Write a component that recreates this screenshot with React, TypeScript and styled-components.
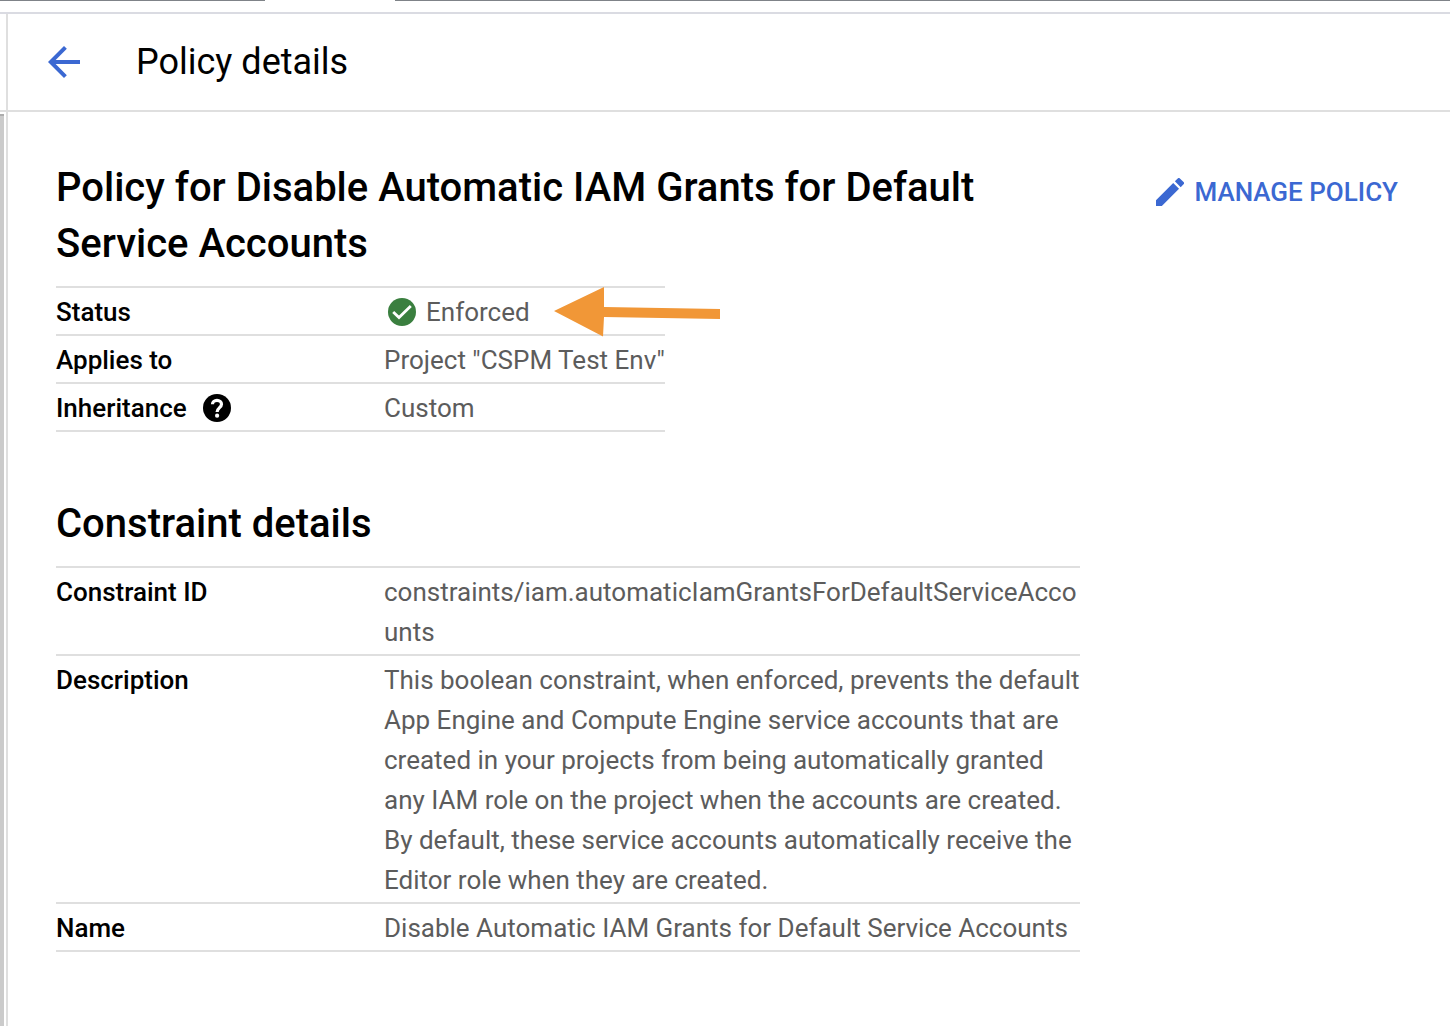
import React from "react";
import styled, { createGlobalStyle } from "styled-components";

const color = {
  blue: "#3b68d2",
  ink: "#000000",
  muted: "#5c5c5c",
  line: "#dfdfdf",
  strip: "#dadbe2",
  green: "#3a7f3f",
  orange: "#f19737",
};

const GlobalStyle = createGlobalStyle`
  *, *::before, *::after { box-sizing: border-box; }
  html, body { margin: 0; background: #ffffff; }
  body {
    font-family: Roboto, "Liberation Sans", sans-serif;
    font-size: 26px;
    line-height: 40px;
    color: ${color.ink};
  }
`;

const Page = styled.div`
  min-height: 100vh;
  display: flex;
  flex-direction: column;
`;

const TabStrip = styled.div`
  display: flex;
  height: 14px;
  border-bottom: 2px solid ${color.strip};
`;

const TabEdge = styled.div<{ $grow?: boolean }>`
  height: 1px;
  width: 265px;
  flex: ${(p) => (p.$grow ? "1" : "none")};
  background: #7f8388;
`;

const ActiveTab = styled.div`
  width: 130px;
`;

const Body = styled.div`
  flex: 1;
  display: flex;
`;

const Rail = styled.div`
  width: 8px;
  display: flex;
  flex-direction: column;
  border-right: 2px solid ${color.line};
`;

const RailHead = styled.div`
  height: 98px;
  border-bottom: 2px solid ${color.line};
`;

const RailBar = styled.div`
  flex: 1;
  width: 4px;
  margin-top: 2px;
  background: #cbcbcb;
  border-top: 2px solid #adadad;
`;

const Panel = styled.div`
  flex: 1;
  min-width: 0;
`;

const Header = styled.header`
  display: flex;
  align-items: center;
  gap: 48px;
  height: 98px;
  padding: 0 32px;
  border-bottom: 2px solid ${color.line};
`;

const BackButton = styled.button`
  display: flex;
  padding: 0;
  border: 0;
  background: none;
  color: ${color.blue};
  cursor: pointer;
`;

const PageTitle = styled.h1`
  margin: 0;
  font-size: 36px;
  line-height: 48px;
  font-weight: 400;
`;

const Content = styled.div`
  display: flex;
  justify-content: space-between;
  align-items: flex-start;
  gap: 48px;
  padding: 48px 52px 48px 48px;
`;

const Main = styled.main`
  flex: 1;
  max-width: 1024px;
`;

const Section = styled.section`
  & + & {
    margin-top: 64px;
  }
`;

const SectionTitle = styled.h2`
  margin: 0 0 14px;
  font-size: 40px;
  line-height: 56px;
  font-weight: 500;
`;

const Details = styled.table`
  border-spacing: 0;
  border-top: 2px solid ${color.line};
`;

const Label = styled.th`
  width: 328px;
  min-width: 328px;
  padding: 4px 0 2px;
  border-bottom: 2px solid ${color.line};
  font-weight: 500;
  text-align: left;
  vertical-align: top;
`;

const Value = styled.td`
  padding: 4px 0 2px;
  border-bottom: 2px solid ${color.line};
  color: ${color.muted};
  overflow-wrap: anywhere;
`;

const LabelWithHelp = styled.div`
  display: flex;
  align-items: center;
  gap: 16px;
`;

const HelpButton = styled.button`
  display: flex;
  padding: 0;
  border: 0;
  background: none;
  color: ${color.ink};
`;

const Status = styled.div`
  position: relative;
  display: flex;
  align-items: center;
  gap: 8px;
  padding-left: 2px;
`;

const Pointer = styled.svg`
  position: absolute;
  left: 170px;
  top: -5px;
  width: 167px;
  height: 50px;
`;

const ManageButton = styled.button`
  display: flex;
  align-items: center;
  gap: 10px;
  margin-top: 12px;
  padding: 0;
  border: 0;
  background: none;
  color: ${color.blue};
  font: inherit;
  font-weight: 500;
  white-space: nowrap;
  cursor: pointer;
`;

const BackIcon = () => (
  <svg width="48" height="48" viewBox="0 0 24 24" fill="currentColor" aria-hidden="true">
    <path d="M20 11H7.83l5.59-5.59L12 4l-8 8 8 8 1.41-1.41L7.83 13H20v-2z" />
  </svg>
);

const EditIcon = () => (
  <svg width="28" height="28" viewBox="3 3 18 18" fill="currentColor" aria-hidden="true">
    <path d="M3 17.25V21h3.75L17.81 9.94l-3.75-3.75L3 17.25zM20.71 7.04a.996.996 0 0 0 0-1.41l-2.34-2.34a.996.996 0 0 0-1.41 0l-1.83 1.83 3.75 3.75 1.83-1.83z" />
  </svg>
);

const HelpIcon = () => (
  <svg width="28" height="28" viewBox="0 0 28 28" aria-hidden="true">
    <circle cx="14" cy="14" r="14" fill="currentColor" />
    <path
      d="M9.5 10.3a4.5 4 0 0 1 9 0c0 3.3-4.4 3.4-4.4 7.7"
      fill="none"
      stroke="#fff"
      strokeWidth="3.2"
    />
    <circle cx="14.1" cy="21.7" r="2.1" fill="#fff" />
  </svg>
);

const EnforcedIcon = () => (
  <svg width="32" height="32" viewBox="0 0 32 32" aria-hidden="true">
    <circle cx="16" cy="16" r="14" fill={color.green} />
    <path d="M7.2 16l5.8 5.6L24.8 10" fill="none" stroke="#fff" strokeWidth="2.8" />
  </svg>
);

const App = () => (
  <>
    <GlobalStyle />
    <Page>
      <TabStrip>
        <TabEdge />
        <ActiveTab />
        <TabEdge $grow />
      </TabStrip>
      <Body>
        <Rail>
          <RailHead />
          <RailBar />
        </Rail>
        <Panel>
          <Header>
            <BackButton type="button" aria-label="Back">
              <BackIcon />
            </BackButton>
            <PageTitle>Policy details</PageTitle>
          </Header>
          <Content>
            <Main>
              <Section>
                <SectionTitle>
                  Policy for Disable Automatic IAM Grants for Default Service Accounts
                </SectionTitle>
                <Details>
                  <tbody>
                    <tr>
                      <Label scope="row">Status</Label>
                      <Value>
                        <Status>
                          <EnforcedIcon />
                          Enforced
                          <Pointer viewBox="0 0 167 50" aria-hidden="true">
                            <path
                              d="M0 24L50 0L50 20L166 22V32L50 30L49 49.5Z"
                              fill={color.orange}
                            />
                          </Pointer>
                        </Status>
                      </Value>
                    </tr>
                    <tr>
                      <Label scope="row">Applies to</Label>
                      <Value>Project "CSPM Test Env"</Value>
                    </tr>
                    <tr>
                      <Label scope="row">
                        <LabelWithHelp>
                          Inheritance
                          <HelpButton type="button" aria-label="Help">
                            <HelpIcon />
                          </HelpButton>
                        </LabelWithHelp>
                      </Label>
                      <Value>Custom</Value>
                    </tr>
                  </tbody>
                </Details>
              </Section>
              <Section>
                <SectionTitle>Constraint details</SectionTitle>
                <Details>
                  <tbody>
                    <tr>
                      <Label scope="row">Constraint ID</Label>
                      <Value>constraints/iam.automaticIamGrantsForDefaultServiceAccounts</Value>
                    </tr>
                    <tr>
                      <Label scope="row">Description</Label>
                      <Value>
                        This boolean constraint, when enforced, prevents the default App Engine
                        and Compute Engine service accounts that are created in your projects
                        from being automatically granted any IAM role on the project when the
                        accounts are created. By default, these service accounts automatically
                        receive the Editor role when they are created.
                      </Value>
                    </tr>
                    <tr>
                      <Label scope="row">Name</Label>
                      <Value>
                        Disable Automatic IAM Grants for Default Service Accounts
                      </Value>
                    </tr>
                  </tbody>
                </Details>
              </Section>
            </Main>
            <ManageButton type="button">
              <EditIcon />
              MANAGE POLICY
            </ManageButton>
          </Content>
        </Panel>
      </Body>
    </Page>
  </>
);

export default App;
